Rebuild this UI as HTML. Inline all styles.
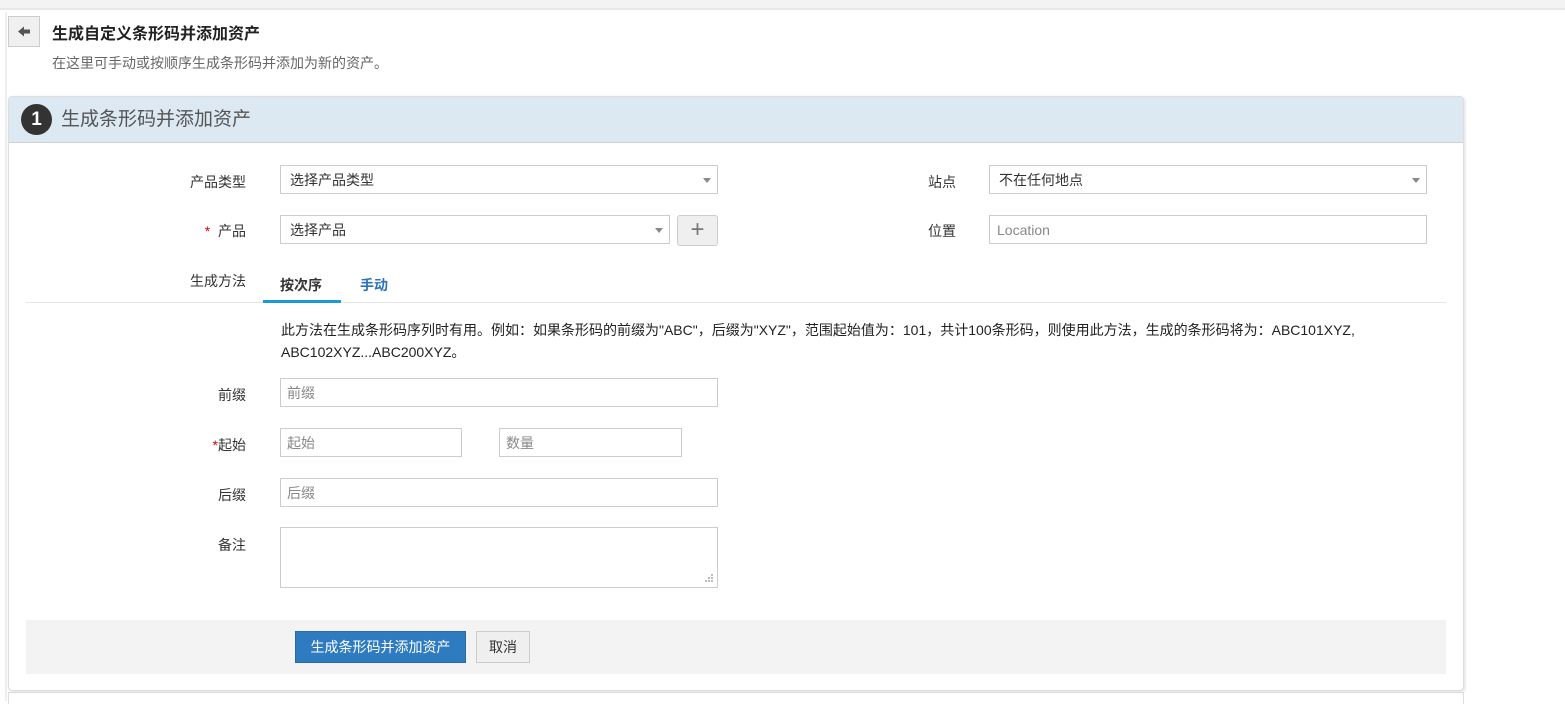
<!DOCTYPE html>
<html><head><meta charset="utf-8"><style>
*{box-sizing:border-box;margin:0;padding:0}
body{width:1565px;height:701px;overflow:hidden;background:#fff;font-family:"Liberation Sans","Noto Sans CJK SC",sans-serif;font-size:14px;color:#333;position:relative}
.abs{position:absolute}
.top{left:0;top:0;width:1565px;height:10px;background:#f3f3f3;border-bottom:2px solid #e8e8e8}
.lb{left:5px;top:12px;width:2px;height:689px;background:#eee}
.back{left:8px;top:16px;width:32px;height:31px;border:1px solid #ccc;background:#f0f0f0}
.card{left:8px;top:96px;width:1456px;height:595px;border:1px solid #ddd;border-radius:4px;box-shadow:1px 1px 3px #ddd}
.hd{left:9px;top:97px;width:1454px;height:46px;background:#dce8f2;border-bottom:1px solid #d0d0d0}
.lbl{text-align:right;width:120px;font-size:14px;color:#333}
.inp{border:1px solid #ccc;background:#fff;height:29px;font-size:14px;color:#333;padding:6px 9px;line-height:16px}
.ph{color:#888;padding-left:6px}
.caret{position:absolute;right:6px;top:12px;width:0;height:0;border-left:4px solid transparent;border-right:4px solid transparent;border-top:5px solid #888}
.star{color:#d00}
</style></head><body>
<div class="abs top"></div>
<div class="abs lb"></div>
<div class="abs back"><svg width="30" height="29" viewBox="0 0 30 29"><path d="M9 14.5 L15 9.5 V12.5 H21 V16.5 H15 V19.5 Z" fill="#555"/></svg></div>
<div class="abs" style="left:52px;top:20px;font-size:16px;font-weight:bold;color:#222">生成自定义条形码并添加资产</div>
<div class="abs" style="left:52px;top:53px;font-size:14px;color:#666">在这里可手动或按顺序生成条形码并添加为新的资产。</div>
<div class="abs card"></div>
<div class="abs hd"></div>
<div class="abs" style="left:21px;top:104px;width:31px;height:31px;border-radius:50%;background:#333;color:#fff;font-weight:bold;font-size:19px;text-align:center;line-height:31px">1</div>
<div class="abs" style="left:61px;top:104px;font-size:19px;color:#555">生成条形码并添加资产</div>

<div class="abs lbl" style="left:126px;top:172px">产品类型</div>
<div class="abs inp" style="left:280px;top:165px;width:438px">选择产品类型<span class="caret"></span></div>
<div class="abs lbl" style="left:126px;top:221px"><span class="star">*</span>&nbsp; 产品</div>
<div class="abs inp" style="left:280px;top:215px;width:390px">选择产品<span class="caret"></span></div>
<div class="abs" style="left:677px;top:215px;width:41px;height:31px;border:1px solid #ccc;border-radius:3px;background:#efefef;color:#777;text-align:center;font-size:24px;line-height:28px">+</div>

<div class="abs lbl" style="left:836px;top:172px">站点</div>
<div class="abs inp" style="left:989px;top:165px;width:438px">不在任何地点<span class="caret"></span></div>
<div class="abs lbl" style="left:836px;top:221px">位置</div>
<div class="abs inp ph" style="left:989px;top:215px;width:438px;padding-left:7px">Location</div>

<div class="abs lbl" style="left:126px;top:271px">生成方法</div>
<div class="abs" style="left:280px;top:275px;font-weight:bold;color:#333;font-size:14px">按次序</div>
<div class="abs" style="left:360px;top:275px;font-weight:bold;color:#2a73b8;font-size:14px">手动</div>
<div class="abs" style="left:26px;top:302px;width:1420px;height:1px;background:#e5e5e5"></div>
<div class="abs" style="left:263px;top:300px;width:78px;height:3px;background:#1a9ad6"></div>

<div class="abs" style="left:281px;top:319px;font-size:14px;color:#222;line-height:22px;width:1150px">此方法在生成条形码序列时有用。例如：如果条形码的前缀为"ABC"，后缀为"XYZ"，范围起始值为：101，共计100条形码，则使用此方法，生成的条形码将为：ABC101XYZ, ABC102XYZ...ABC200XYZ。</div>

<div class="abs lbl" style="left:126px;top:385px">前缀</div>
<div class="abs inp ph" style="left:280px;top:378px;width:438px">前缀</div>
<div class="abs lbl" style="left:126px;top:435px"><span class="star">*</span>起始</div>
<div class="abs inp ph" style="left:280px;top:428px;width:182px">起始</div>
<div class="abs inp ph" style="left:499px;top:428px;width:183px">数量</div>
<div class="abs lbl" style="left:126px;top:485px">后缀</div>
<div class="abs inp ph" style="left:280px;top:478px;width:438px">后缀</div>
<div class="abs lbl" style="left:126px;top:535px">备注</div>
<div class="abs inp" style="left:280px;top:527px;width:438px;height:61px"></div>
<svg class="abs" style="left:705px;top:574px" width="9" height="9"><g fill="#bbb"><rect x="6" y="0" width="2" height="2"/><rect x="3" y="3" width="2" height="2"/><rect x="6" y="3" width="2" height="2"/><rect x="0" y="6" width="2" height="2"/><rect x="3" y="6" width="2" height="2"/><rect x="6" y="6" width="2" height="2"/></g></svg>

<div class="abs" style="left:26px;top:620px;width:1420px;height:54px;background:#f3f3f3"></div>
<div class="abs" style="left:295px;top:631px;width:171px;height:32px;background:#2f7bbf;border:1px solid #2a6aa5;color:#fff;text-align:center;line-height:30px;font-size:14px">生成条形码并添加资产</div>
<div class="abs" style="left:476px;top:631px;width:54px;height:32px;background:#efefef;border:1px solid #ccc;color:#333;text-align:center;line-height:30px;font-size:14px">取消</div>

<div class="abs" style="left:8px;top:692px;width:1456px;height:12px;border:1px solid #ddd;border-bottom:none"></div>
</body></html>
